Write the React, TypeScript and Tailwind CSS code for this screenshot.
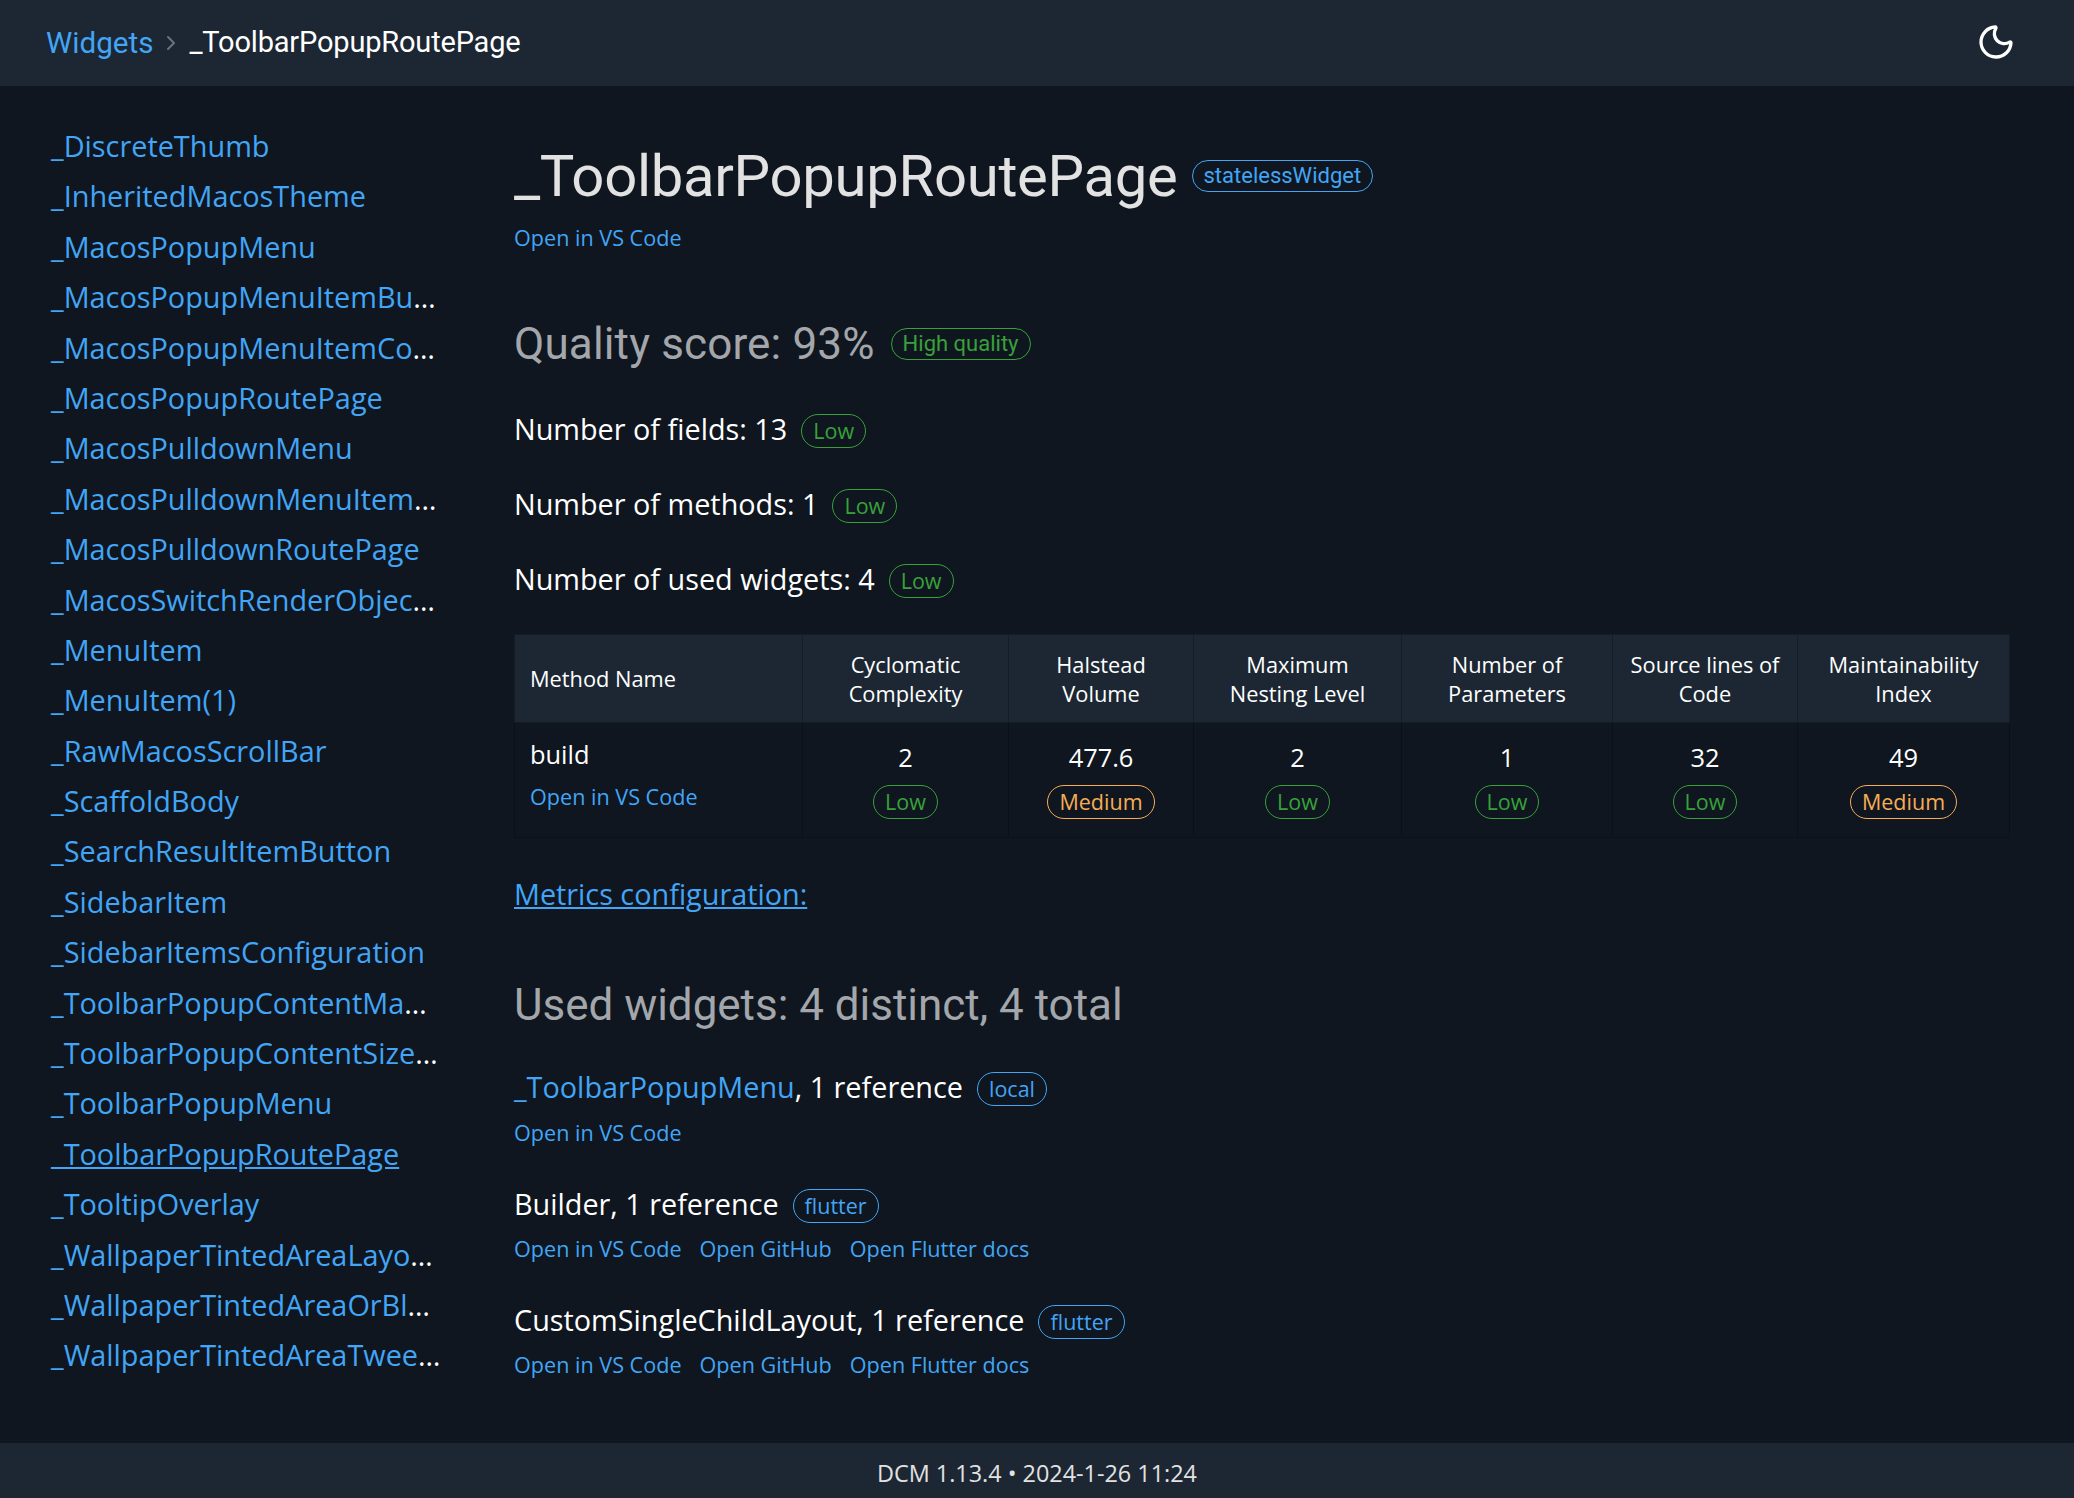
import type { ReactNode } from "react";
import { Moon, ChevronRight } from "lucide-react";

const body = "font-['Open_Sans','Liberation_Sans',sans-serif]";
const head = "font-['Roboto','Open_Sans',sans-serif]";

const items: [string, boolean?][] = [
  ["_DiscreteThumb"],
  ["_InheritedMacosTheme"],
  ["_MacosPopupMenu"],
  ["_MacosPopupMenuItemBu", true],
  ["_MacosPopupMenuItemCo", true],
  ["_MacosPopupRoutePage"],
  ["_MacosPulldownMenu"],
  ["_MacosPulldownMenuItem", true],
  ["_MacosPulldownRoutePage"],
  ["_MacosSwitchRenderObjec", true],
  ["_MenuItem"],
  ["_MenuItem(1)"],
  ["_RawMacosScrollBar"],
  ["_ScaffoldBody"],
  ["_SearchResultItemButton"],
  ["_SidebarItem"],
  ["_SidebarItemsConfiguration"],
  ["_ToolbarPopupContentMa", true],
  ["_ToolbarPopupContentSize", true],
  ["_ToolbarPopupMenu"],
  ["_ToolbarPopupRoutePage"],
  ["_TooltipOverlay"],
  ["_WallpaperTintedAreaLayo", true],
  ["_WallpaperTintedAreaOrBl", true],
  ["_WallpaperTintedAreaTwee", true],
];

function Badge({ children, color, heading }: { children: ReactNode; color: "green" | "orange" | "blue"; heading?: boolean }) {
  const c = color === "green" ? "text-[#38a13a] border-[#38a13a]" : color === "orange" ? "text-[#f6ad55] border-[#f6ad55]" : "text-[#42a5f5] border-[#42a5f5]";
  return heading ? (
    <span className={`inline-flex h-[32px] items-center rounded-full border px-[11px] text-[22px] font-normal leading-none tracking-normal ${c}`}>{children}</span>
  ) : (
    <span className={`mt-[3px] inline-flex h-[34px] items-center rounded-full border px-[11px] text-[21.5px] font-normal leading-none ${c}`}>{children}</span>
  );
}

function A({ children }: { children: ReactNode }) {
  return <a className="text-[#42a5f5]">{children}</a>;
}

function Links({ all, cls }: { all?: boolean; cls: string }) {
  return (
    <div className={`flex gap-[18px] text-[21.6px] leading-[32px] ${cls}`}>
      <A>Open in VS Code</A>
      {all && <A>Open GitHub</A>}
      {all && <A>Open Flutter docs</A>}
    </div>
  );
}

function Row({ children, cls }: { children: ReactNode; cls: string }) {
  return <div className={`flex h-[40px] items-center gap-[14px] text-[28.8px] ${cls}`}>{children}</div>;
}

const cols = [
  { w: "w-[288px]", t: "Method Name" },
  { w: "w-[206px]", t: "Cyclomatic Complexity", v: "2", b: "Low" },
  { w: "w-[185px]", t: "Halstead Volume", v: "477.6", b: "Medium" },
  { w: "w-[208px]", t: "Maximum Nesting Level", v: "2", b: "Low" },
  { w: "w-[211px]", t: "Number of Parameters", v: "1", b: "Low" },
  { w: "w-[185px]", t: "Source lines of Code", v: "32", b: "Low" },
  { w: "w-[212px]", t: "Maintainability Index", v: "49", b: "Medium" },
];

export default function App() {
  return (
    <div className={`${body} flex min-h-screen flex-col bg-[#0f161f] text-white`}>
      <header className="flex h-[86px] shrink-0 items-center justify-between bg-[#1c2733] pl-[46px] pr-[58px]">
        <div className={`${head} flex items-center text-[29px]`}>
          <a className="text-[29.6px] text-[#42a5f5]">Widgets</a>
          <ChevronRight className="mx-[6px] h-[24px] w-[24px] text-[#6b7280]" />
          <span className="tracking-[-0.18px]">_ToolbarPopupRoutePage</span>
        </div>
        <Moon className="-mt-[2px] h-[40px] w-[40px] text-white" strokeWidth={2} />
      </header>

      <main className="flex flex-1">
        <nav className="w-[514px] shrink-0 pl-[51px] pt-[35px]">
          {items.map(([n, cut]) => (
            <div key={n} className="h-[50.4px] whitespace-nowrap text-[28.85px] leading-[50.4px]">
              <a className={`text-[#42a5f5] ${n === "_ToolbarPopupRoutePage" ? "underline" : ""}`}>{n}</a>
              {cut && "…"}
            </div>
          ))}
        </nav>

        <section className="flex-1 pr-[64px] pt-[44px]">
          <h1 className={`${head} flex items-center gap-[14px] text-[58px] leading-[92px] tracking-[-0.3px] text-[#e2e2e2]`}>
            _ToolbarPopupRoutePage
            <Badge color="blue" heading>statelessWidget</Badge>
          </h1>
          <Links cls="" />

          <h2 className={`${head} mt-[60px] flex items-center gap-[16px] text-[44px] leading-[60px] tracking-[0.15px] text-[#a3a6aa]`}>
            Quality score: 93%
            <Badge color="green" heading>High quality</Badge>
          </h2>
          <Row cls="mt-[35px]">Number of fields: 13 <Badge color="green">Low</Badge></Row>
          <Row cls="mt-[35px]">Number of methods: 1 <Badge color="green">Low</Badge></Row>
          <Row cls="mt-[35px]">Number of used widgets: 4 <Badge color="green">Low</Badge></Row>

          <table className="mt-[35px] w-[1496px] table-fixed border-collapse">
            <thead>
              <tr className="h-[88px] bg-[#1c2733]">
                {cols.map((c, i) => (
                  <th key={c.t} className={`${c.w} border border-[#141c26] px-[15px] text-[21.8px] font-normal leading-[29px] ${i === 0 ? "text-left" : "text-center"}`}>{c.t}</th>
                ))}
              </tr>
            </thead>
            <tbody>
              <tr className="h-[115px]">
                <td className="border border-[#0b1118] px-[15px] align-top">
                  <div className="pt-[10px] text-[25.4px] leading-[42px]">build</div>
                  <div className="text-[21.6px] leading-[43px]"><A>Open in VS Code</A></div>
                </td>
                {cols.slice(1).map((c) => (
                  <td key={c.t} className="border border-[#0b1118] text-center align-top">
                    <div className="pt-[13px] text-[25.4px] leading-[42px]">{c.v}</div>
                    <div className="mt-[4px]"><Badge color={c.b === "Low" ? "green" : "orange"}>{c.b}</Badge></div>
                  </td>
                ))}
              </tr>
            </tbody>
          </table>

          <div className="mt-[36px] text-[28.8px] leading-[40px]"><a className="text-[#42a5f5] underline">Metrics configuration:</a></div>
          <h2 className={`${head} mt-[61px] text-[44px] leading-[60px] tracking-[-0.03px] text-[#a3a6aa]`}>Used widgets: 4 distinct, 4 total</h2>

          <Row cls="mt-[32px]">
            <span><A>_ToolbarPopupMenu</A>, 1 reference</span>
            <Badge color="blue">local</Badge>
          </Row>
          <Links cls="mt-[10px]" />
          <Row cls="mt-[35px]">
            <span>Builder, 1 reference</span>
            <Badge color="blue">flutter</Badge>
          </Row>
          <Links all cls="mt-[9px]" />
          <Row cls="mt-[35px]">
            <span>CustomSingleChildLayout, 1 reference</span>
            <Badge color="blue">flutter</Badge>
          </Row>
          <Links all cls="mt-[9px]" />
        </section>
      </main>

      <footer className="flex h-[55px] shrink-0 items-center justify-center bg-[#1c2733] pt-[6px] text-[23.4px] text-[#e2e2e2]">DCM 1.13.4 • 2024-1-26 11:24</footer>
    </div>
  );
}
